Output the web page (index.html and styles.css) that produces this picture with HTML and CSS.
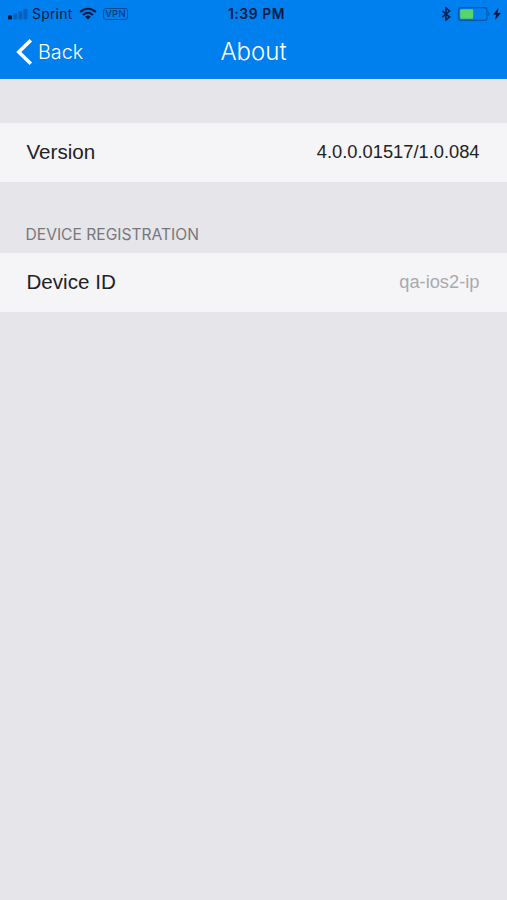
FILE: index.html
```html
<!DOCTYPE html>
<html lang="en">
<head>
<meta charset="utf-8">
<title>About</title>
<link rel="stylesheet" href="styles.css">
</head>
<body>
<header class="header">
  <div class="status">
    <div class="status-left">
      <svg class="signal" width="20" height="12" viewBox="0 0 20 12"><rect x="0" y="7.3" width="4" height="4.2" rx="1.2" fill="#031a45"/><g fill="#0561bd"><rect x="5.2" y="5.5" width="4" height="6" rx="1"/><rect x="10.4" y="3.2" width="4" height="8.3" rx="1"/><rect x="15.5" y="0.8" width="4" height="10.7" rx="1"/></g></svg>
      <span class="carrier">Sprint</span>
      <svg class="wifi" width="18" height="13" viewBox="0 0 18 13"><g fill="none" stroke="#031a45" stroke-width="2.2"><path d="M1.2 5.1C5.5 .6 12.5 .6 16.8 5.1"/><path d="M4.1 8C7 5.2 11 5.2 13.9 8"/></g><path d="M9 12.4 6.2 9.7Q9 7.4 11.8 9.7Z" fill="#031a45"/></svg>
      <span class="vpn">VPN</span>
    </div>
    <time class="time">1:39 PM</time>
    <div class="status-right">
      <svg class="bluetooth" width="10" height="14" viewBox="0 0 10 14"><path d="M1.2 3.8 8.5 10 5 13V1l3.5 3L1.2 10.2" fill="none" stroke="#032352" stroke-width="1.6"/></svg>
      <svg class="battery" width="32" height="14" viewBox="0 0 32 14"><rect x=".6" y=".6" width="28.4" height="12.8" rx="2.7" fill="none" stroke="#0657a8" stroke-width="1.1"/><rect x="2.2" y="2.2" width="13" height="9.6" rx="1" fill="#57d568"/><path d="M30.2 4.8c1.5.5 1.5 3.9 0 4.4z" fill="#0657a8"/></svg>
      <svg class="bolt" width="8" height="12" viewBox="0 0 8 12"><path d="M5.4 0 0 6.8h3L2.1 12 8 4.9H4.7z" fill="#031a45"/></svg>
    </div>
  </div>
  <nav class="nav">
    <a class="back"><svg width="17" height="28" viewBox="0 0 17 28"><path d="M14.8 2.2 2.8 14l12 11.8" fill="none" stroke="#fff" stroke-width="3.6"/></svg><span>Back</span></a>
    <h1 class="title">About</h1>
  </nav>
</header>
<main>
  <section class="row"><span class="label">Version</span><span class="value">4.0.0.01517/1.0.084</span></section>
  <h2 class="heading">DEVICE REGISTRATION</h2>
  <section class="row"><span class="label">Device ID</span><span class="value muted">qa-ios2-ip</span></section>
</main>
</body>
</html>
```
FILE: styles.css
```css
* { box-sizing: border-box; }
body { margin: 0; min-height: 900px; background: #e5e5ea; font-family: "Liberation Sans", Arial, sans-serif; color: #222226; }
svg { display: block; flex: none; }
.header { height: 79px; background: #007fee; font-family: Inter, "Liberation Sans", sans-serif; }
.status { display: grid; grid-template-columns: 1fr auto 1fr; height: 27px; padding: 0 6px 0 8px; align-items: center; color: #031a45; }
.status-left, .status-right { display: flex; align-items: center; }
.status-right { justify-content: flex-end; }
.carrier { margin-left: 4px; width: 41px; font-size: 13.8px; line-height: 16px; letter-spacing: .3px; white-space: nowrap; }
.wifi { margin-left: 6px; }
.vpn { margin-left: 6px; width: 25px; height: 12px; border: 1px solid #064c99; border-radius: 3px; font-size: 9.4px; font-weight: 500; line-height: 10px; text-align: center; color: #043875; letter-spacing: .3px; }
.time { padding-left: 4px; font-size: 13.8px; line-height: 16px; font-weight: 600; letter-spacing: .6px; }
.bluetooth { margin-right: 7px; }
.bolt { margin-left: 3px; }
.nav { display: grid; grid-template-columns: 1fr auto 1fr; align-items: center; height: 50px; padding: 0 16px; color: #fff; }
.back { display: flex; align-items: center; gap: 5px; font-size: 19.8px; font-weight: 300; line-height: 28px; }
.title { margin: 0; font-size: 24px; font-weight: 300; line-height: 28px; }
main { padding-top: 44px; }
.row { display: flex; align-items: center; justify-content: space-between; height: 59px; padding: 0 27.5px 0 26.5px; background: #f5f5f8; }
.label { padding-bottom: 2px; font-size: 20.6px; }
.value { padding-bottom: 1px; font-size: 18.3px; }
.muted { color: #aaaaac; }
.heading { margin: 0; height: 71px; padding: 43px 0 0 25.5px; font: 400 15.6px/20px Inter, sans-serif; color: #77777c; }
```
